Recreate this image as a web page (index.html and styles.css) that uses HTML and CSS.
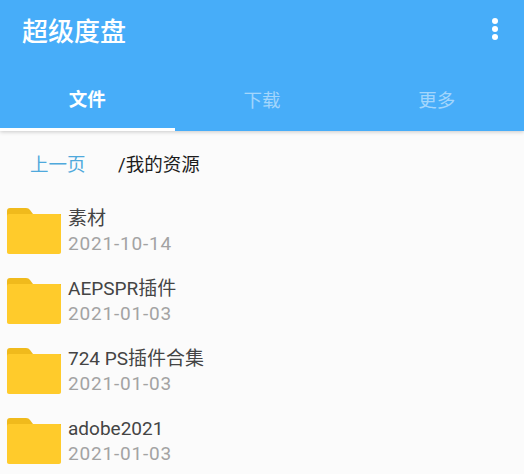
FILE: index.html
```html
<!DOCTYPE html>
<html lang="zh-CN">
<head>
    <meta charset="UTF-8">
    <meta name="viewport" content="width=device-width, initial-scale=1.0">
    <title>超级度盘</title>
    <link rel="stylesheet" href="styles.css">
</head>
<body>
    <header class="app-bar">
        <div class="toolbar">
            <h1>超级度盘</h1>
            <div class="more-btn">
                <span class="dot"></span>
                <span class="dot"></span>
                <span class="dot"></span>
            </div>
        </div>
        <nav class="tabs">
            <div class="tab active">文件</div>
            <div class="tab">下载</div>
            <div class="tab">更多</div>
        </nav>
    </header>
    <div class="path-row">
        <span class="prev">上一页</span>
        <span class="path">/我的资源</span>
    </div>
    <ul class="file-list">
        <li class="file-row">
            <svg class="folder" viewBox="0 0 54 46"><path class="folder-back" d="M3 0h16c2 0 3 .8 4 2l3 4H54v10H0V3C0 1 1 0 3 0z"/><path class="folder-front" d="M2 6h50c1.200 0 2 .8 2 2v36c0 1.200-.8 2-2 2H2c-1.200 0-2-.8-2-2V8c0-1.200.8-2 2-2z"/></svg>
            <div class="file-info">
                <div class="file-name">素材</div>
                <div class="file-date">2021-10-14</div>
            </div>
        </li>
        <li class="file-row">
            <svg class="folder" viewBox="0 0 54 46"><path class="folder-back" d="M3 0h16c2 0 3 .8 4 2l3 4H54v10H0V3C0 1 1 0 3 0z"/><path class="folder-front" d="M2 6h50c1.200 0 2 .8 2 2v36c0 1.200-.8 2-2 2H2c-1.200 0-2-.8-2-2V8c0-1.200.8-2 2-2z"/></svg>
            <div class="file-info">
                <div class="file-name">AEPSPR插件</div>
                <div class="file-date">2021-01-03</div>
            </div>
        </li>
        <li class="file-row">
            <svg class="folder" viewBox="0 0 54 46"><path class="folder-back" d="M3 0h16c2 0 3 .8 4 2l3 4H54v10H0V3C0 1 1 0 3 0z"/><path class="folder-front" d="M2 6h50c1.200 0 2 .8 2 2v36c0 1.200-.8 2-2 2H2c-1.200 0-2-.8-2-2V8c0-1.200.8-2 2-2z"/></svg>
            <div class="file-info">
                <div class="file-name">724 PS插件合集</div>
                <div class="file-date">2021-01-03</div>
            </div>
        </li>
        <li class="file-row">
            <svg class="folder" viewBox="0 0 54 46"><path class="folder-back" d="M3 0h16c2 0 3 .8 4 2l3 4H54v10H0V3C0 1 1 0 3 0z"/><path class="folder-front" d="M2 6h50c1.200 0 2 .8 2 2v36c0 1.200-.8 2-2 2H2c-1.200 0-2-.8-2-2V8c0-1.200.8-2 2-2z"/></svg>
            <div class="file-info">
                <div class="file-name">adobe2021</div>
                <div class="file-date">2021-01-03</div>
            </div>
        </li>
    </ul>
</body>
</html>
```

FILE: styles.css
```css
* {
    box-sizing: border-box;
}
html, body {
    height: 100%;
    overflow: hidden;
}
body {
    margin: 0;
    background-color: #fbfbfb;
    font-family: Roboto, "Noto Sans CJK SC", sans-serif;
}
.app-bar {
    height: 131px;
    background-color: #47adf9;
    box-shadow: 0 1px 4px rgba(0,0,0,0.2);
}
.toolbar {
    height: 66px;
    padding: 0 22px 8px;
    display: flex;
    align-items: center;
    justify-content: space-between;
}
.toolbar h1 {
    margin: 0;
    color: #fff;
    font-size: 26px;
    font-weight: 500;
}
.more-btn {
    width: 6px;
    margin-right: 4px;
    display: flex;
    flex-direction: column;
    gap: 2px;
}
.dot {
    width: 6px;
    height: 6px;
    border-radius: 50%;
    background-color: #fff;
}
.tabs {
    height: 65px;
    display: flex;
}
.tab {
    flex: 1;
    display: flex;
    align-items: center;
    justify-content: center;
    color: rgba(255,255,255,0.5);
    font-size: 18.5px;
}
.tab.active {
    color: #fff;
    font-weight: 700;
    border-bottom: 3px solid #fff;
    padding-top: 2px;
}
.path-row {
    height: 67px;
    padding: 0 0 4px 30px;
    display: flex;
    align-items: center;
    font-size: 18.5px;
}
.prev {
    color: #4fa9dc;
    width: 88px;
}
.path {
    color: #1c1c1c;
}
.file-list {
    list-style: none;
    margin: 0;
    padding: 0 0 0 7px;
}
.file-row {
    height: 70px;
    display: flex;
    align-items: flex-start;
    padding-top: 10px;
}
.folder {
    width: 54px;
    height: 46px;
    flex-shrink: 0;
}
.folder-back {
    fill: #f0ba1c;
}
.folder-front {
    fill: #ffcb2b;
}
.file-info {
    margin-left: 7px;
    margin-top: -2px;
}
.file-name {
    color: #444;
    font-size: 19px;
    line-height: 25px;
}
.file-date {
    color: #a3a3a3;
    font-size: 19px;
    letter-spacing: 0.8px;
    line-height: 25px;
}
```
